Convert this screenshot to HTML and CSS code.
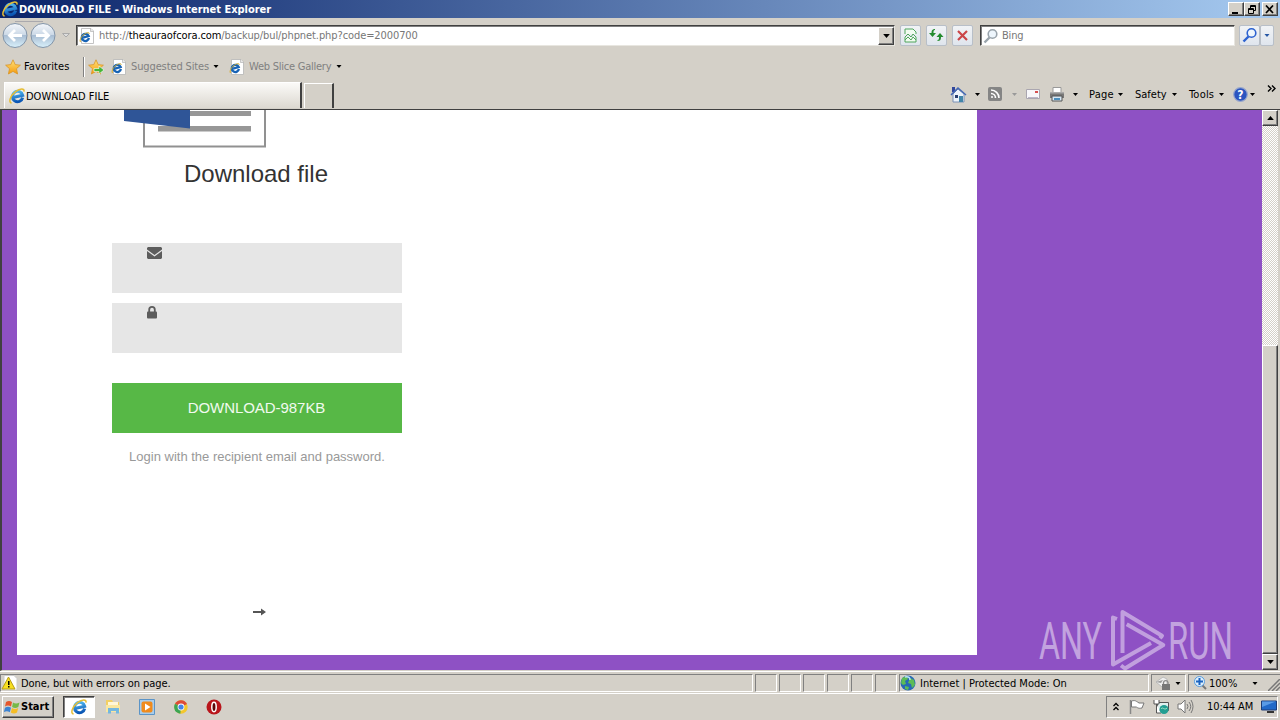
FILE: index.html
```html
<!DOCTYPE html>
<html lang="en">
<head>
    <meta charset="UTF-8">
    <meta name="viewport" content="width=device-width, initial-scale=1.0">
    <title>DOWNLOAD FILE</title>
    <link rel="stylesheet" href="styles.css">
</head>
<body>
    <!-- shared icons -->
    <svg class="defs" width="0" height="0">
        <linearGradient id="blue" x1="0" y1="0" x2="0" y2="1"><stop offset="0" stop-color="#4fb6ef"/><stop offset="1" stop-color="#0b56b4"/></linearGradient>
        <linearGradient id="orb" x1="0" y1="0" x2="0" y2="1"><stop offset="0" stop-color="#f4f7fb"/><stop offset=".48" stop-color="#cbd8e6"/><stop offset=".5" stop-color="#a9bdd3"/><stop offset="1" stop-color="#d9f1fb"/></linearGradient>
        <linearGradient id="gold" x1="0" y1="0" x2="0" y2="1"><stop offset="0" stop-color="#ffe27a"/><stop offset="1" stop-color="#f59a0c"/></linearGradient>
        <symbol id="ie" viewBox="0 0 16 16">
            <g transform="rotate(-12 8 8)">
                <path d="M13.200 10.800A5.200 5.200 0 1 1 13.700 8.500H4.600" fill="none" stroke="url(#blue)" stroke-width="3"/>
            </g>
            <path d="M2.600 15C-.8 14.600 1 8 6.500 3.600C11 .3 15.800 0 14.900 3.600" fill="none" stroke="#e6bd35" stroke-width="1.500"/>
        </symbol>
        <symbol id="iepage" viewBox="0 0 16 16">
            <path d="M2.500.5h9.500l2.500 2.500v12.500h-12z" fill="#fff" stroke="#b5b5b5" stroke-width=".8"/>
            <path d="M11.500.5v3h3" fill="#e8e8e8" stroke="#aaa" stroke-width=".6"/>
            <g transform="rotate(-15 6 9)">
                <path d="M9.500 11A3.600 3.600 0 1 1 9.800 9H4" fill="none" stroke="#1763b5" stroke-width="2.300"/>
            </g>
            <path d="M1.500 14C0 12 3 7 6.500 5.500 9 4 10.500 4.500 10 6" fill="none" stroke="#d7ae2c"/>
        </symbol>
        <symbol id="star" viewBox="0 0 16 16">
            <path d="M8 .8l2.200 4.800 5.200.6-3.900 3.500 1.100 5.300L8 12.400 3.400 15l1.100-5.300L.6 6.200l5.200-.6z" fill="url(#gold)" stroke="#d8952a" stroke-width=".8"/>
        </symbol>
        <symbol id="caret" viewBox="0 0 5 3"><path d="M0 0h5L2.500 3z" fill="currentColor"/></symbol>
        <symbol id="glass" viewBox="0 0 16 16">
            <path d="M6.500 9.500L1.500 14.500" stroke="currentColor" stroke-width="2.400"/>
            <circle cx="9.500" cy="6" r="4.300" fill="#eef6fd" stroke="currentColor" stroke-width="1.600"/>
        </symbol>
    </svg>

    <header class="titlebar">
        <svg class="i16"><use href="#ie"/></svg>
        <span class="title">DOWNLOAD FILE - Windows Internet Explorer</span>
        <div class="winbtns">
            <button><svg width="10" height="9"><path d="M1 7h6v2H1z"/></svg></button>
            <button><svg width="10" height="9" fill="none" stroke="#000"><path d="M3.500 4V.5h5v5H7M3 1.500h6M1.500 3.500h5v5h-5zM1 4.500h6"/></svg></button>
            <button class="close"><svg width="10" height="9"><path d="M1 .5l7 7.500M8 .5L1 8" stroke="#000" stroke-width="1.700"/></svg></button>
        </div>
    </header>

    <div class="navbar">
        <svg class="orbs" width="56" height="30" viewBox="0 0 56 30">
            <path d="M13 1.500h28" stroke="#aaa9ad"/>
            <circle cx="13" cy="15.500" r="12" fill="url(#orb)" stroke="#8294a8"/>
            <circle cx="41" cy="15.500" r="12" fill="url(#orb)" stroke="#8294a8"/>
            <path d="M20 15.500H8M13 10l-5.500 5.500L13 21" fill="none" stroke="#fff" stroke-width="2.800"/>
            <path d="M34 15.500h12M41 10l5.500 5.500L41 21" fill="none" stroke="#fff" stroke-width="2.800"/>
        </svg>
        <svg class="history" width="8" height="5"><path d="M.5.500h7L4 4z" fill="#ddd" stroke="#aaa"/></svg>
        <div class="address">
            <svg class="i16"><use href="#iepage"/></svg>
            <span class="url">http://<b>theauraofcora.com</b>/backup/bul/phpnet.php?code=2000700</span>
            <button class="drop"><svg class="caret big"><use href="#caret"/></svg></button>
        </div>
        <button class="tool"><svg width="13" height="15" fill="none" stroke="#4fa55c"><path d="M1 6V1h8l3 3v2M1 9v5h11V9" fill="#f1fbf0"/><path d="M1 9l3-3 3 3 2-3 3 3M1 12l3-3 3 3 2-3 3 3"/></svg></button>
        <button class="tool"><svg width="15" height="14" fill="#238b2e"><path d="M6 1v1C4.500 2 4.500 3 4.500 5H7L3.500 9 0 5h2.500C2.500 2 3.500 1 6 1zM8.500 13v-1c1.500 0 1.500-1 1.500-3H7.500L11 5l3.500 4H12c0 3-1 4-3.500 4z"/></svg></button>
        <button class="tool"><svg width="13" height="13"><path d="M2 2l9 9M11 2l-9 9" stroke="#cb4548" stroke-width="2.200"/></svg></button>
        <div class="search">
            <svg class="i16 grey"><use href="#glass"/></svg>
            <span>Bing</span>
        </div>
        <button class="tool go"><svg class="i16"><use href="#glass"/></svg></button>
        <button class="tool go-drop"><svg class="caret"><use href="#caret"/></svg></button>
    </div>

    <div class="favbar">
        <svg class="i16"><use href="#star"/></svg>
        <span class="fav">Favorites</span>
        <svg class="i16 addstar"><use href="#star"/><path d="M6 9.500h5V7l5 4-5 4v-2.500H6z" fill="#45b639" stroke="#fff" stroke-width=".6"/></svg>
        <svg class="i16 pageicon"><use href="#iepage"/></svg>
        <span class="link suggested">Suggested Sites</span>
        <svg class="caret"><use href="#caret"/></svg>
        <svg class="i16 slice"><use href="#iepage"/></svg>
        <span class="link gallery">Web Slice Gallery</span>
        <svg class="caret"><use href="#caret"/></svg>
    </div>

    <div class="tabbar">
        <div class="tab"><svg class="i16"><use href="#ie"/></svg><span>DOWNLOAD FILE</span></div>
        <div class="newtab"></div>
        <div class="commands">
            <svg width="17" height="17" viewBox="0 0 17 17"><path d="M2 1h3v5H2z" fill="#32479c"/><path d="M3 8l5-5 6 5v8H3z" fill="#edf3fb" stroke="#7a90b5"/><path d="M1 9l7-7 8 7" fill="none" stroke="#4568b4" stroke-width="1.500"/><path d="M9 10h4v6H9z" fill="#4285a9"/><path d="M5 9h3v3H5z" fill="#293e70"/></svg>
            <svg class="caret c-home"><use href="#caret"/></svg>
            <svg class="c-rss" width="14" height="14" fill="none" stroke="#fff" stroke-width="1.600"><rect width="14" height="14" rx="2" fill="#858585" stroke="none"/><path d="M3 6.500A4.500 4.500 0 0 1 7.500 11M3 3a8 8 0 0 1 8 8"/><circle cx="4" cy="10" r="1" fill="#fff" stroke="none"/></svg>
            <svg class="caret c-rssdrop"><use href="#caret"/></svg>
            <svg class="c-mail" width="14" height="10"><path d="M.5.500h13v9H.5z" fill="#f8f7fa" stroke="#aaa6b0"/><path d="M2 8.500h10" stroke="#bcb7c8"/><path d="M9 2h3v2H9z" fill="#d75050"/></svg>
            <svg class="c-print" width="16" height="15"><path d="M4 .5h8V6H4z" fill="#fff" stroke="#999"/><path d="M1 5h14v6H1z" fill="#777"/><path d="M1 5h14v1.500H1z" fill="#aaa"/><path d="M3 9h10v5H3z" fill="#d7e7f3" stroke="#555"/><path d="M5 11h6v2H5z" fill="#4c8fbd"/></svg>
            <svg class="caret c-printdrop"><use href="#caret"/></svg>
            <span class="c-page">Page</span><svg class="caret"><use href="#caret"/></svg>
            <span class="c-safety">Safety</span><svg class="caret"><use href="#caret"/></svg>
            <span class="c-tools">Tools</span><svg class="caret"><use href="#caret"/></svg>
            <svg class="c-help" width="15" height="15"><circle cx="7.500" cy="7.500" r="6.800" fill="#2c55c0" stroke="#96a5cc" stroke-width="1.200"/><text x="7.500" y="11.500" text-anchor="middle" class="q">?</text></svg>
            <svg class="caret c-helpdrop"><use href="#caret"/></svg>
            <svg class="c-more" width="9" height="7" fill="none" stroke="#000" stroke-width="1.400"><path d="M1 .5l3 3-3 3M5 .5l3 3-3 3"/></svg>
        </div>
    </div>

    <div class="viewport">
        <main class="page">
            <div class="form">
                <svg class="doc" width="142" height="38" viewBox="0 0 142 38">
                    <path d="M20 -5V36.500H141V-5" fill="#fff" stroke="#919191" stroke-width="2"/>
                    <path d="M34 1h93v5H34zM34 16h93v5.500H34z" fill="#979797"/>
                    <path d="M0 0h66v18.500L0 11z" fill="#2f5597"/>
                </svg>
                <h1>Download file</h1>
                <div class="field"><svg width="15" height="12" fill="#5c5c5c"><path d="M1 0h13l1 1v1.500L7.500 8 0 2.500V1zM0 4l7.500 5.500L15 4v7l-1 1H1l-1-1z"/></svg></div>
                <div class="field lock"><svg width="10" height="13"><path d="M2.200 6V3.700a2.800 2.800 0 0 1 5.600 0V6" fill="none" stroke="#5c5c5c" stroke-width="1.800"/><rect y="5.500" width="10" height="7" rx="1" fill="#5c5c5c"/></svg></div>
                <button class="download">DOWNLOAD-987KB</button>
                <p class="hint">Login with the recipient email and password.</p>
                <svg class="arrow" width="13" height="8"><path d="M0 3h8V.5L13 4 8 7.500V5H0z" fill="#555"/></svg>
            </div>
        </main>
        <div class="scrollbar">
            <button><svg class="caret big up"><use href="#caret"/></svg></button>
            <div class="thumb"></div>
            <button><svg class="caret big"><use href="#caret"/></svg></button>
        </div>
        <svg class="watermark" width="196" height="62" viewBox="0 0 196 62">
            <text x="1" y="50" textLength="63" lengthAdjust="spacingAndGlyphs">ANY</text>
            <text x="130" y="50" textLength="65" lengthAdjust="spacingAndGlyphs">RUN</text>
            <path d="M79 10l-4-1.500v47L113 34M84.500 44V3L124 26.700l-2 2.500M88.700 15.300L125.300 36 87 59.500l-4-3" fill="none" stroke="#fff" stroke-opacity=".45" stroke-width="4" stroke-linejoin="round"/>
        </svg>
    </div>

    <div class="statusbar">
        <div class="pane message">
            <svg width="17" height="16"><path d="M3 .5h10l3 3V15H3z" fill="#fff" stroke="#ccc"/><path d="M7.500 2L14 14H1z" fill="#f7df20" stroke="#b79c18"/><path d="M7 6h1.500v4H7zM7 11h1.500v1.500H7z"/></svg>
            <span>Done, but with errors on page.</span>
        </div>
        <div class="pane"></div>
        <div class="pane"></div>
        <div class="pane"></div>
        <div class="pane"></div>
        <div class="pane"></div>
        <div class="pane"></div>
        <div class="pane zone">
            <svg width="16" height="16"><circle cx="8" cy="8" r="7.500" fill="#2769b5"/><path d="M2 3l5-2 1 3-3 2 1 3-3 1-2-2zM10 3l4 2 1 5-3 3-1-4-3-1zM5 11l4 1-1 3-3-1z" fill="#5cbc55"/><path d="M5 2c4-1 5 1 5 3" stroke="#b9e3f8" fill="none" stroke-width="1.500"/></svg>
            <span>Internet | Protected Mode: On</span>
        </div>
        <div class="pane privacy">
            <svg width="16" height="15"><path d="M1 6l7-5 4 2v8H7z" fill="#eee" stroke="#bbb"/><path d="M1 6l5 1 2-3z" fill="#999"/><path d="M8.500 8V6.500a2.300 2.300 0 0 1 4.500 0V8" fill="none" stroke="#888" stroke-width="1.300"/><path d="M7 8h8v6H7z" fill="#777"/></svg>
            <svg class="caret"><use href="#caret"/></svg>
        </div>
        <div class="pane zoom">
            <svg width="13" height="14"><path d="M8 9l4 4" stroke="#777" stroke-width="2"/><circle cx="5.500" cy="5.500" r="5" fill="#dff0fc" stroke="#579bdd"/><path d="M5.500 2v7M2 5.500h7" stroke="#1b63c0" stroke-width="2"/></svg>
            <span>100%</span>
            <svg class="caret"><use href="#caret"/></svg>
            <svg class="grip" width="12" height="12"><path d="M0 12L12 0M4 12l8-8M8 12l4-4" stroke="#777" stroke-width="1.500"/></svg>
        </div>
    </div>

    <footer class="taskbar">
        <button class="start">
            <svg width="17" height="16"><path d="M2 3c2-1.500 4-1.500 6 0L7 7.500C5 6 3 6 1 7.500z" fill="#e5562b"/><path d="M9 3.500c2 1.300 4 1.300 6.500 0l-1.200 4.500c-2 1.300-4 1.300-6.200 0z" fill="#76b947"/><path d="M1 8.700c2-1.400 4-1.400 6 0l-1.200 4.500c-2-1.300-4-1.300-6 0z" fill="#3c83d2"/><path d="M8 9c2 1.300 4 1.300 6.200 0L13 13.500c-2 1.300-4 1.300-6.200 0z" fill="#f5bd25"/></svg>
            <span>Start</span>
        </button>
        <div class="running"><svg class="i16"><use href="#ie"/></svg></div>
        <svg class="explorer" width="16" height="15"><path d="M1 1h6l1 2h6v10H1z" fill="#f2cf63"/><path d="M3 3h10v3H3z" fill="#fff7d7"/><path d="M1 6h14v7H1z" fill="#f9e7a0"/><path d="M3 14.500V9h11v5.500h-3V12H6v2.500z" fill="#74b7df"/></svg>
        <svg class="player" width="16" height="16"><path d="M.5.500h15v15H.5z" fill="#a9cdeb" stroke="#5b94c7"/><rect x="2.500" y="2.500" width="11" height="11" rx="2" fill="#f08b1d"/><path d="M6 4.500L11.500 8 6 11.500z" fill="#fff"/></svg>
        <svg class="chrome" width="14" height="14"><circle cx="7" cy="7" r="6.700" fill="#f3c72d"/><path d="M7 7L1 3.700A6.700 6.700 0 0 1 13 4z" fill="#dd4b39"/><path d="M7 7L1 3.700a6.700 6.700 0 0 0 5.300 10z" fill="#3da553"/><circle cx="7" cy="7" r="3.400" fill="#fff"/><circle cx="7" cy="7" r="2.600" fill="#4584e8"/></svg>
        <svg class="opera" width="16" height="16"><circle cx="8" cy="8" r="7.500" fill="#b9151b"/><ellipse cx="8" cy="8" rx="2.200" ry="4.700" fill="#5c0709" stroke="#fff" stroke-width="1.500"/></svg>
        <div class="tray">
            <svg class="t-up" width="6" height="9" fill="none" stroke="#000" stroke-width="1.300"><path d="M.5 4L3 1.500 5.500 4M.5 8L3 5.500 5.500 8"/></svg>
            <svg class="t-flag" width="16" height="16"><path d="M1.500 1v14" stroke="#888" stroke-width="1.500"/><path d="M2.500 2c4-1 4 0 6 1l1.500 1h5l-2 5c-4 1-5-1-6-1H2.500z" fill="#fff" stroke="#777"/></svg>
            <svg class="t-net" width="17" height="16"><path d="M4.500 3.500h11v8h-11z" fill="#dff0ee" stroke="#555"/><path d="M1 1v4h5V1M3.500 5v9H8" fill="#fff" stroke="#555"/><circle cx="11" cy="10.500" r="4.500" fill="#239e92"/><path d="M8 10c2-3 3 2 6-1" stroke="#a6e3c4" fill="none"/></svg>
            <svg class="t-sound" width="17" height="15" fill="none" stroke="#777"><path d="M1 5h3l4-4v13L4 10H1z" fill="#fff"/><path d="M10 5q2 2.500 0 5M12 3q3.500 4.500 0 9M14 1q4 6.500 0 13"/></svg>
            <span>10:44 AM</span>
            <svg class="t-desk" width="16" height="13"><path d="M.5 1h15v9H.5z" fill="#2269c8" stroke="#1e3d77"/><path d="M1 1.500h14L1 7z" fill="#5a9be6"/><path d="M6 11h7v2H6z" fill="#333"/></svg>
        </div>
    </footer>
</body>
</html>
```

FILE: styles.css
```css
* {
    box-sizing: border-box;
}
body {
    margin: 0;
    width: 1280px;
    height: 720px;
    overflow: hidden;
    display: flex;
    flex-direction: column;
    background: #d4d0c8;
    color: #000;
    font-family: "DejaVu Sans Condensed", "DejaVu Sans", sans-serif;
    font-size: 11px;
    white-space: nowrap;
}
button {
    padding: 0;
    font: inherit;
    color: inherit;
}
svg {
    display: block;
    flex: none;
}
.defs {
    position: absolute;
}
.i16 {
    width: 16px;
    height: 16px;
}
.caret {
    width: 6px;
    height: 3px;
}
.caret.big {
    width: 7px;
    height: 4px;
}
.up {
    transform: rotate(180deg);
}

/* title bar */
.titlebar {
    display: flex;
    align-items: center;
    height: 18px;
    padding: 0 2px;
    background: linear-gradient(90deg, #0a246a, #a6caf0);
    color: #fff;
}
.title {
    margin-left: 1px;
    width: 253px;
    font-weight: bold;
    letter-spacing: -0.03px;
}
.winbtns {
    display: flex;
    margin-left: auto;
}
.winbtns button {
    display: flex;
    align-items: center;
    justify-content: center;
    width: 16px;
    height: 14px;
}
.winbtns .close {
    margin-left: 2px;
}
.winbtns button,
.drop,
.scrollbar button,
.start {
    background: #d4d0c8;
    border: 1px solid;
    border-color: #fff #404040 #404040 #fff;
    box-shadow: inset -1px -1px #808080;
}

/* address row */
.navbar {
    display: flex;
    align-items: center;
    height: 34px;
    padding-left: 2px;
}
.history {
    margin-left: 4px;
}
.address {
    display: flex;
    align-items: center;
    width: 819px;
    height: 21px;
    margin: 1px 5px 0 6px;
    padding-left: 2px;
}
.address,
.search {
    background: #fff;
    border: 1px solid;
    border-color: #404040 #e8e6e0 #e8e6e0 #404040;
    box-shadow: inset 1px 1px #808080;
}
.url {
    margin-left: 4px;
    color: #777;
    letter-spacing: -0.09px;
}
.url b {
    color: #000;
    font-weight: normal;
}
.drop {
    display: flex;
    align-items: center;
    justify-content: center;
    width: 16px;
    height: 18px;
    margin-left: auto;
}
.tool {
    display: flex;
    align-items: center;
    justify-content: center;
    width: 21px;
    height: 21px;
    margin-right: 5px;
    background: linear-gradient(#f1f3f6, #dfe5ed);
    border: 1px solid #b8bfc8;
    border-radius: 2px;
}
.search {
    display: flex;
    align-items: center;
    width: 255px;
    height: 21px;
    margin: 1px 4px 0 2px;
    padding-left: 2px;
    color: #777;
}
.search span {
    margin-left: 3px;
    letter-spacing: -0.2px;
}
.grey {
    color: #9aa4ac;
}
.go {
    margin-right: 0;
    color: #2c62d0;
}
.go-drop {
    width: 14px;
    color: #2757a5;
}

/* favorites row */
.favbar {
    display: flex;
    align-items: center;
    height: 29px;
    padding-left: 5px;
}
.fav {
    display: flex;
    align-items: center;
    width: 60px;
    height: 20px;
    margin-left: 3px;
    border-right: 1px solid #808080;
    box-shadow: 1px 0 #fff;
    letter-spacing: 0.1px;
}
.addstar {
    margin-left: 4px;
}
.pageicon {
    margin-left: 7px;
}
.link {
    margin-left: 4px;
    color: #808080;
    letter-spacing: -0.12px;
}
.suggested {
    width: 82px;
}
.slice {
    margin-left: 10px;
}
.gallery {
    width: 87px;
    letter-spacing: -0.24px;
}

/* tabs and command bar */
.tabbar {
    display: flex;
    align-items: flex-end;
    height: 28px;
    padding: 0 0 1px 4px;
}
.tab {
    display: flex;
    align-items: center;
    width: 298px;
    height: 26px;
    padding: 1px 0 0 4px;
    background: linear-gradient(#fbfaf8, #dcd8d0);
    border: solid;
    border-width: 1px 2px 0 1px;
    border-color: #fff #404040 #404040 #fff;
}
.tab span {
    margin-left: 1px;
}
.newtab {
    width: 30px;
    height: 25px;
    margin-left: 2px;
    border: solid;
    border-width: 1px 2px 0 1px;
    border-color: #fff #404040 #404040 #fff;
}
.commands {
    display: flex;
    align-items: center;
    height: 28px;
    margin-left: 616px;
}
.commands .caret {
    width: 5px;
}
.c-home {
    margin-left: 8px;
}
.c-rss {
    margin-left: 8px;
}
.c-rssdrop {
    margin-left: 10px;
    color: #999;
}
.c-mail {
    margin-left: 9px;
}
.c-print {
    margin-left: 9px;
}
.c-printdrop {
    margin-left: 8px;
}
.c-page {
    width: 29px;
    margin-left: 11px;
    letter-spacing: 0.2px;
}
.c-safety {
    width: 37px;
    margin-left: 12px;
}
.c-tools {
    width: 30px;
    margin-left: 12px;
    letter-spacing: 0.2px;
}
.c-help {
    margin-left: 9px;
}
.q {
    fill: #fff;
    font-size: 12px;
    font-weight: bold;
}
.c-helpdrop {
    margin-left: 2px;
}
.c-more {
    margin: 0 0 12px 12px;
}

/* page area */
.viewport {
    position: relative;
    display: flex;
    justify-content: space-between;
    height: 562px;
    padding: 0 2px 0 15px;
    background: #8e51c4;
    border: solid #404040;
    border-width: 1px 0 0 2px;
    border-bottom: 1px solid #d4d0c8;
}
.page {
    width: 960px;
    height: 545px;
    padding-left: 95px;
    background: #fff;
    font-family: "Liberation Sans", Arial, sans-serif;
}
.form {
    display: flex;
    flex-direction: column;
    width: 290px;
}
.doc {
    margin-left: 12px;
}
h1 {
    margin: 12px 0 55px;
    padding-right: 2px;
    color: #333;
    font-size: 24px;
    font-weight: normal;
    line-height: 28px;
    text-align: center;
}
.field {
    height: 50px;
    margin-bottom: 10px;
    padding: 4px 35px;
    background: #e6e6e6;
}
.field.lock {
    padding-top: 3px;
}
.download {
    height: 50px;
    margin-top: 20px;
    padding: 0 1px 2px 0;
    background: #57b846;
    border: none;
    color: #f1faef;
    font-size: 15px;
    letter-spacing: -0.05px;
}
.hint {
    margin: 16px 0 0;
    color: #999;
    font-size: 13px;
    line-height: 16px;
    text-align: center;
}
.arrow {
    margin: 143px 0 0 141px;
}
.scrollbar {
    display: flex;
    flex-direction: column;
    justify-content: space-between;
    width: 16px;
    background: repeating-conic-gradient(#d4d0c8 0 25%, #fff 0 50%) 0 0 / 2px 2px;
}
.scrollbar button {
    display: flex;
    align-items: center;
    justify-content: center;
    width: 16px;
    height: 16px;
}
.thumb {
    height: 309px;
    margin-top: auto;
    background: #d4d0c8;
    border: 1px solid;
    border-color: #fff #404040 #404040 #fff;
    box-shadow: inset -1px -1px #808080;
}
.watermark {
    position: absolute;
    left: 1036px;
    top: 499px;
}
.watermark text {
    fill: #fff;
    fill-opacity: 0.47;
    font-family: Roboto, sans-serif;
    font-size: 52px;
}
.viewport::after {
    content: "";
    position: absolute;
    top: 0;
    right: 0;
    width: 2px;
    height: 561px;
    background: #d4d0c8;
}

/* status bar */
.statusbar {
    display: flex;
    gap: 2px;
    height: 23px;
    padding: 2px 0 1px;
    border-top: 1px solid #fff;
    border-bottom: 1px solid #fff;
}
.pane {
    display: flex;
    flex: none;
    align-items: center;
    width: 22px;
    border: 1px solid;
    border-color: #808080 #fff #fff #808080;
}
.message {
    width: 753px;
}
.message span {
    margin-left: 3px;
    letter-spacing: -0.07px;
}
.zone {
    width: 250px;
}
.zone span {
    margin-left: 4px;
}
.privacy {
    width: 35px;
    padding-left: 3px;
    gap: 4px;
}
.zoom {
    width: 92px;
    padding-left: 5px;
    border-right: 0;
}
.zoom span {
    width: 43px;
    margin-left: 2px;
}
.grip {
    margin: 4px 0 0 10px;
}

/* taskbar */
.taskbar {
    display: flex;
    align-items: center;
    height: 26px;
    padding: 1px 2px 2px;
}
.start {
    display: flex;
    align-items: center;
    width: 52px;
    height: 22px;
    padding-left: 1px;
    font-size: 11px;
    font-weight: bold;
}
.running {
    display: flex;
    align-items: center;
    justify-content: center;
    width: 32px;
    height: 22px;
    margin-left: 9px;
    background: #fff;
    border: 1px solid;
    border-color: #404040 #fff #fff #404040;
    box-shadow: inset 1px 1px #808080;
}
.explorer {
    margin-left: 10px;
}
.player {
    margin-left: 18px;
}
.chrome {
    margin-left: 19px;
}
.opera {
    margin-left: 18px;
}
.tray {
    display: flex;
    align-items: center;
    width: 172px;
    height: 22px;
    margin-left: auto;
    padding-left: 6px;
    border: 1px solid;
    border-color: #808080 #fff #fff #808080;
}
.t-flag {
    margin-left: 10px;
}
.t-net {
    margin-left: 8px;
}
.t-sound {
    margin-left: 7px;
}
.tray span {
    width: 48px;
    margin-left: 13px;
    letter-spacing: -0.1px;
}
.t-desk {
    margin-left: 6px;
}
```
